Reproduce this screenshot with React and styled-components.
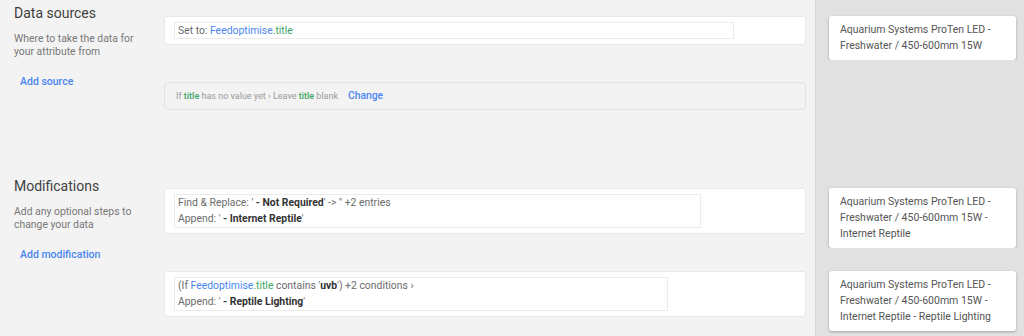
import styled, { createGlobalStyle } from 'styled-components';

const GlobalStyle = createGlobalStyle`
  * { box-sizing: border-box; }
  body {
    margin: 0;
    background: #f3f3f3;
    font-family: Roboto, "Liberation Sans", Arial, sans-serif;
    color: #6b6b6b;
  }
`;

const Page = styled.div`
  display: grid;
  grid-template-columns: 164px 651px 1fr;
  height: 336px;
  overflow: hidden;
`;

const Label = styled.div`
  grid-column: 1;
  grid-row: span ${p => p.$rows};
  padding: ${p => p.$top}px 8px 0 14px;
`;

const Heading = styled.h2`
  margin: 0;
  font-size: 14px;
  line-height: 18px;
  font-weight: 400;
  color: #3f3f3f;
`;

const Description = styled.p`
  margin: 10px 0 0;
  font-size: 10.4px;
  line-height: 13px;
  color: #777;
`;

const AddLink = styled.a`
  display: block;
  margin: 17px 0 0 6px;
  font-size: 10.5px;
  line-height: 13px;
  font-weight: 500;
  color: #4a86f0;
  cursor: pointer;
`;

const MainCell = styled.div`
  grid-column: 2;
  padding: ${p => p.$top}px 9px 0 0;
`;

const SideCell = styled.div`
  grid-column: 3;
  background: #e1e1e1;
  border-left: 1px solid #d7d7d7;
  padding: ${p => p.$top}px 8px ${p => p.$bottom || 0}px 13px;
`;

const Card = styled.div`
  background: ${p => (p.$muted ? 'transparent' : '#fff')};
  border: 1px solid ${p => (p.$muted ? '#e2e2e2' : '#e8e8e8')};
  border-radius: ${p => (p.$muted ? 5 : 3)}px;
  padding: 5px ${p => (p.$muted ? 11 : 9)}px;
  font-size: ${p => (p.$muted ? 9 : 10.4)}px;
  line-height: 15px;
`;

const Field = styled.div`
  width: ${p => p.$w}px;
  background: #fff;
  border: 1px solid #ebebeb;
  padding: 0 3px;
  line-height: ${p => p.$lh}px;
  color: #6b6b6b;
`;

const Source = styled.span`
  color: #4a86f0;
`;

const Attr = styled.span`
  color: #3da564;
  font-weight: ${p => (p.$strong ? 500 : 400)};
`;

const Strong = styled.b`
  color: #333;
  font-weight: 700;
`;

const Faint = styled.span`
  color: #9a9a9a;
`;

const Change = styled.a`
  margin-left: 10px;
  color: #4a86f0;
  font-weight: 500;
  font-size: 10.3px;
  cursor: pointer;
`;

const Preview = styled.div`
  background: #fff;
  border-radius: 3px;
  box-shadow: 0 1px 3px rgba(0, 0, 0, 0.28);
  padding: 6px 12px 6px 11px;
  font-size: 10.5px;
  line-height: 16px;
  color: #555;
`;

const base = 'Aquarium Systems ProTen LED - Freshwater / 450-600mm 15W';

export default function App() {
  return (
    <>
      <GlobalStyle />
      <Page>
        <Label $rows={2} $top={4}>
          <Heading>Data sources</Heading>
          <Description>Where to take the data for your attribute from</Description>
          <AddLink>Add source</AddLink>
        </Label>

        <MainCell $top={16}>
          <Card>
            <Field $w={560} $lh={15}>
              Set to: <Source>Feedoptimise</Source><Attr>.title</Attr>
            </Field>
          </Card>
        </MainCell>
        <SideCell $top={16}>
          <Preview>{base}</Preview>
        </SideCell>

        <MainCell $top={22}>
          <Card $muted>
            <Faint>
              If <Attr $strong>title</Attr> has no value yet › Leave <Attr $strong>title</Attr> blank
            </Faint>
            <Change>Change</Change>
          </Card>
        </MainCell>
        <SideCell $top={22} />

        <Label $rows={2} $top={67}>
          <Heading>Modifications</Heading>
          <Description>Add any optional steps to change your data</Description>
          <AddLink>Add modification</AddLink>
        </Label>

        <MainCell $top={78}>
          <Card>
            <Field $w={527} $lh={16}>
              Find &amp; Replace: '<Strong> - Not Required</Strong>' -&gt; '' +2 entries
              <br />
              Append: '<Strong> - Internet Reptile</Strong>'
            </Field>
          </Card>
        </MainCell>
        <SideCell $top={78}>
          <Preview>{base} - Internet Reptile</Preview>
        </SideCell>

        <MainCell $top={23}>
          <Card>
            <Field $w={494} $lh={16}>
              (If <Source>Feedoptimise</Source><Attr>.title</Attr> contains '<Strong>uvb</Strong>') +2 conditions ›
              <br />
              Append: '<Strong> - Reptile Lighting</Strong>'
            </Field>
          </Card>
        </MainCell>
        <SideCell $top={23} $bottom={6}>
          <Preview>{base} - Internet Reptile - Reptile Lighting</Preview>
        </SideCell>
      </Page>
    </>
  );
}
